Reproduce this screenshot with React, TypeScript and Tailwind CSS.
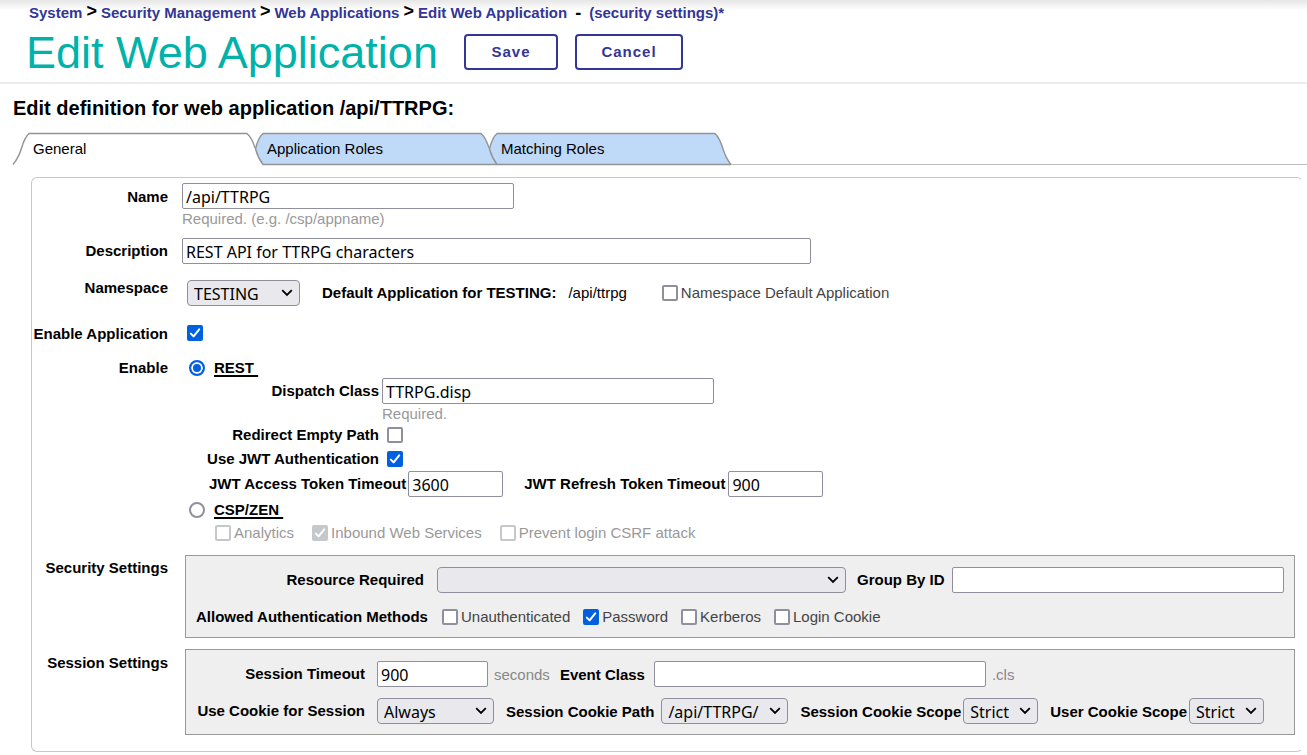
import { useId, useState } from "react";
import type { InputHTMLAttributes, ReactNode } from "react";
import clsx from "clsx";

// ── Form controls ───────────────────────────────────────────

function TextInput({ className, ...props }: InputHTMLAttributes<HTMLInputElement>) {
    return (
        <input
            type="text"
            className={clsx(
                "h-[26px] shrink-0 rounded-xs border border-[#8f8f9d] bg-white px-[3px] pt-0.5 font-['Noto_Sans',sans-serif] text-base leading-5 text-black",
                className,
            )}
            {...props}
        />
    );
}

function Select({ id, options, className }: { id: string; options: string[]; className?: string }) {
    return (
        <span className={clsx("inline-grid shrink-0 items-center", className)}>
            <select
                id={id}
                className="col-start-1 row-start-1 h-[26px] w-full appearance-none rounded border border-[#8f8f9d] bg-[#e9e9ed] pt-px pl-1.5 pr-6 font-['Noto_Sans',sans-serif] text-base leading-5 text-black"
            >
                {options.map((option) => (
                    <option key={option}>{option}</option>
                ))}
            </select>
            <svg
                width="12"
                height="8"
                viewBox="0 0 12 8"
                fill="none"
                stroke="#000"
                strokeWidth="1.8"
                className="pointer-events-none col-start-1 row-start-1 mr-[7px] justify-self-end"
            >
                <path d="M1.2 1.2 6 6l4.8-4.8" />
            </svg>
        </span>
    );
}

function Checkbox({ id, checked, disabled }: { id: string; checked?: boolean; disabled?: boolean }) {
    return (
        <span className={clsx("inline-grid size-4 shrink-0", disabled && "opacity-50")}>
            <input
                id={id}
                type="checkbox"
                defaultChecked={checked}
                disabled={disabled}
                className={clsx(
                    "peer col-start-1 row-start-1 size-4 appearance-none rounded-xs border-2 border-[#8f8f9d] bg-white",
                    disabled ? "checked:bg-[#8f8f9d]" : "checked:border-[#0060df] checked:bg-[#0060df]",
                )}
            />
            <svg
                viewBox="0 0 16 16"
                fill="none"
                stroke="#fff"
                strokeWidth="2"
                strokeLinecap="round"
                strokeLinejoin="round"
                className="pointer-events-none invisible col-start-1 row-start-1 size-4 peer-checked:visible"
            >
                <path d="M3.8 8.6 6.6 11.4 12.2 4.4" />
            </svg>
        </span>
    );
}

function CheckField({ text, checked, disabled }: { text: string; checked?: boolean; disabled?: boolean }) {
    const id = useId();
    return (
        <span className="flex items-center gap-[3px]">
            <Checkbox id={id} checked={checked} disabled={disabled} />
            <label htmlFor={id} className={clsx("whitespace-nowrap", disabled ? "text-[#999]" : "text-[#444]")}>
                {text}
            </label>
        </span>
    );
}

function Radio({ id, checked }: { id: string; checked?: boolean }) {
    return (
        <input
            id={id}
            type="radio"
            name="enable"
            defaultChecked={checked}
            className="size-4 shrink-0 appearance-none rounded-full border-2 border-[#8f8f9d] bg-white checked:border-[#0060df] checked:bg-[#0060df] checked:shadow-[inset_0_0_0_2px_#fff]"
        />
    );
}

function Label({ htmlFor, className, children }: { htmlFor: string; className?: string; children: ReactNode }) {
    return (
        <label htmlFor={htmlFor} className={clsx("shrink-0 whitespace-nowrap font-bold", className)}>
            {children}
        </label>
    );
}

// ── Tabs ────────────────────────────────────────────────────

// Each fill runs on under the next tab's left curve.
const TABS = [
    {
        name: "General",
        width: "w-[242px] pl-5",
        box: "0 0 242 33",
        outline: "M0 32.5C11 20 7 10 16 1.5H234Q239 6 242 16",
        fill: "M0 32.5C11 20 7 10 16 1.5H234Q239 6 242 16Q245 26 250 32.5Z",
    },
    {
        name: "Application Roles",
        width: "w-[234px] pl-3",
        box: "0 0 234 33",
        outline: "M242 32.5H8Q3 26 .5 17Q3 6 8 1.5H226Q231 6 234 16",
        fill: "M8 32.5Q3 26 .5 17Q3 6 8 1.5H226Q231 6 234 16Q237 26 242 32.5Z",
    },
    {
        name: "Matching Roles",
        width: "w-[242px] pl-3",
        box: "0 0 242 33",
        outline: "M242 32.5H8Q3 26 .5 17Q3 6 8 1.5H226C235 10 232 21 242 32.5",
        fill: "M8 32.5Q3 26 .5 17Q3 6 8 1.5H226C235 10 232 21 242 32.5Z",
    },
];

function TabBar() {
    const [active, setActive] = useState("General");

    return (
        <div role="tablist" className="flex pl-[13px]">
            {TABS.map((tab) => (
                <button
                    key={tab.name}
                    role="tab"
                    aria-selected={tab.name === active}
                    onClick={() => setActive(tab.name)}
                    className={clsx("relative h-[33px] shrink-0 text-left", tab.width)}
                >
                    <svg viewBox={tab.box} className="absolute inset-0 size-full overflow-visible" fill="none">
                        <path d={tab.fill} fill={tab.name === active ? "#fff" : "#bfd9f9"} />
                        <path d={tab.outline} stroke="#939393" strokeWidth="1.4" />
                    </svg>
                    <span className="relative">{tab.name}</span>
                </button>
            ))}
            <div className="flex-1 border-b border-[#bbb]" />
        </div>
    );
}

// ── Page ────────────────────────────────────────────────────

const CRUMBS = ["System", "Security Management", "Web Applications", "Edit Web Application"];

function Header() {
    return (
        <header className="border-b-2 border-[#ececec] bg-linear-to-b from-[#e6e6e6] to-white to-[10px] pb-1 pl-[26px]">
            <nav className="flex h-[26px] items-center gap-1 pl-[3px] font-bold text-[#333695]">
                {CRUMBS.map((crumb, index) => (
                    <span key={crumb} className="flex items-center gap-1 whitespace-nowrap">
                        {index > 0 && <span className="pb-1 text-lg leading-5 text-black">&gt;</span>}
                        <a href="#">{crumb}</a>
                    </span>
                ))}
                <span className="px-1 text-lg leading-5 text-black">-</span>
                <a href="#">(security settings)*</a>
            </nav>
            <div className="flex h-[52px] items-center">
                <h1 className="w-[438px] shrink-0 whitespace-nowrap pt-0.5 text-[45px] leading-[50px] text-[#00b2a9]">Edit Web Application</h1>
                <button className="mr-[17px] h-9 w-[94px] rounded border-2 border-[#333695] font-bold tracking-[1px] text-[#333695]">Save</button>
                <button className="h-9 w-[108px] rounded border-2 border-[#333695] font-bold tracking-[1px] text-[#333695]">Cancel</button>
            </div>
        </header>
    );
}

function Row({ label, htmlFor, className, labelClass, children }: { label: string; htmlFor?: string; className?: string; labelClass?: string; children: ReactNode }) {
    return (
        <div className={clsx("flex items-start", className)}>
            <label htmlFor={htmlFor} className={clsx("mr-3.5 w-[136px] shrink-0 whitespace-nowrap text-right font-bold", labelClass)}>
                {label}
            </label>
            {children}
        </div>
    );
}

export default function App() {
    return (
        <div className="bg-white font-['Liberation_Sans',Arial,sans-serif] text-[15px] leading-5 text-black">
            <Header />
            <h2 className="pl-[13px] pt-[11px] pb-[11px] text-xl leading-[26px] font-bold">Edit definition for web application /api/TTRPG:</h2>
            <TabBar />

            <form className="mt-3 mr-1 ml-[31px] rounded-md border border-[#c8c8c8] border-r-transparent pt-[5px] pr-[7px] pb-4">
                <Row label="Name" htmlFor="name" labelClass="leading-7">
                    <div className="flex flex-col">
                        <TextInput id="name" defaultValue="/api/TTRPG" className="w-[332px]" />
                        <span className="leading-[19px] text-[#999]">Required. (e.g. /csp/appname)</span>
                    </div>
                </Row>

                <Row label="Description" htmlFor="description" className="mt-2.5" labelClass="leading-[26px]">
                    <TextInput id="description" defaultValue="REST API for TTRPG characters" className="w-[629px]" />
                </Row>

                <Row label="Namespace" htmlFor="namespace" className="mt-[15px]" labelClass="leading-[18px]">
                    <div className="ml-[5px] flex items-center pt-px">
                        <Select id="namespace" options={["TESTING", "USER"]} className="w-[113px]" />
                        <b className="ml-[22px]">Default Application for TESTING:</b>
                        <span className="mr-[35px] ml-3">/api/ttrpg</span>
                        <CheckField text="Namespace Default Application" />
                    </div>
                </Row>

                <Row label="Enable Application" htmlFor="enabled" className="mt-[18px]">
                    <span className="ml-[5px] flex pt-px">
                        <Checkbox id="enabled" checked />
                    </span>
                </Row>

                <Row label="Enable" className="mt-3.5">
                    <div className="ml-[7px]">
                        <div className="flex items-center gap-[9px]">
                            <Radio id="rest" checked />
                            <Label htmlFor="rest" className="underline decoration-2 underline-offset-2">REST&nbsp;</Label>
                        </div>
                        <div className="flex items-center">
                            <Label htmlFor="dispatch" className="mr-[3px] w-[190px] text-right">Dispatch Class</Label>
                            <TextInput id="dispatch" defaultValue="TTRPG.disp" className="w-[332px]" />
                        </div>
                        <p className="pl-[193px] text-[#999]">Required.</p>
                        <div className="mt-px flex items-center">
                            <Label htmlFor="redirect" className="mr-2 w-[190px] text-right">Redirect Empty Path</Label>
                            <Checkbox id="redirect" />
                        </div>
                        <div className="mt-1 flex items-center">
                            <Label htmlFor="jwt" className="mr-2 w-[190px] text-right">Use JWT Authentication</Label>
                            <Checkbox id="jwt" checked />
                        </div>
                        <div className="mt-0.5 flex items-center">
                            <Label htmlFor="access" className="mr-0.5 ml-5">JWT Access Token Timeout</Label>
                            <TextInput id="access" defaultValue="3600" className="w-[95px]" />
                            <Label htmlFor="refresh" className="mr-[3px] ml-[21px]">JWT Refresh Token Timeout</Label>
                            <TextInput id="refresh" defaultValue="900" className="w-[95px]" />
                        </div>
                        <div className="mt-[3px] flex items-center gap-[9px]">
                            <Radio id="csp" />
                            <Label htmlFor="csp" className="underline decoration-2 underline-offset-2">CSP/ZEN&nbsp;</Label>
                        </div>
                        <div className="mt-[3px] ml-[26px] flex items-center gap-[18px]">
                            <CheckField text="Analytics" disabled />
                            <CheckField text="Inbound Web Services" checked disabled />
                            <CheckField text="Prevent login CSRF attack" disabled />
                        </div>
                    </div>
                </Row>

                <Row label="Security Settings" className="mt-3" labelClass="leading-[26px]">
                    <div className="ml-[3px] flex-1 border border-[#999] bg-[#efefef] py-2.5 pl-2.5 pr-2">
                        <div className="mt-px flex items-center">
                            <Label htmlFor="resource" className="mr-[13px] w-[228px] text-right">Resource Required</Label>
                            <Select id="resource" options={[""]} className="w-[409px]" />
                            <Label htmlFor="group" className="mr-[7px] ml-[11px]">Group By ID</Label>
                            <TextInput id="group" className="w-[332px]" />
                        </div>
                        <div className="mt-3.5 flex items-center">
                            <b className="mr-[18px] w-[228px] shrink-0 whitespace-nowrap text-right">Allowed Authentication Methods</b>
                            <div className="flex gap-[13px]">
                                <CheckField text="Unauthenticated" />
                                <CheckField text="Password" checked />
                                <CheckField text="Kerberos" />
                                <CheckField text="Login Cookie" />
                            </div>
                        </div>
                    </div>
                </Row>

                <Row label="Session Settings" className="mt-[11px]" labelClass="leading-7">
                    <div className="ml-[3px] flex-1 border border-[#999] bg-[#efefef] pt-[11px] pb-2.5 pl-2.5">
                        <div className="flex items-center">
                            <Label htmlFor="timeout" className="mr-3 w-[169px] text-right">Session Timeout</Label>
                            <TextInput id="timeout" defaultValue="900" className="w-[111px]" />
                            <span className="mr-2.5 ml-1.5 pt-0.5 text-[#888]">seconds</span>
                            <Label htmlFor="event" className="mr-[9px] pt-0.5">Event Class</Label>
                            <TextInput id="event" className="w-[332px]" />
                            <span className="ml-1.5 pt-0.5 text-[#888]">.cls</span>
                        </div>
                        <div className="mt-[11px] flex items-center">
                            <Label htmlFor="cookie" className="mr-3 w-[169px] text-right">Use Cookie for Session</Label>
                            <Select id="cookie" options={["Always", "Autodetect", "Never"]} className="w-[117px]" />
                            <Label htmlFor="path" className="mr-[7px] ml-3 pt-0.5">Session Cookie Path</Label>
                            <Select id="path" options={["/api/TTRPG/"]} className="w-[127px]" />
                            <Label htmlFor="scope" className="mr-0.5 ml-3 pt-0.5">Session Cookie Scope</Label>
                            <Select id="scope" options={["Strict", "Lax", "None"]} className="w-[75px]" />
                            <Label htmlFor="user-scope" className="mr-0.5 ml-3 pt-0.5">User Cookie Scope</Label>
                            <Select id="user-scope" options={["Strict", "Lax", "None"]} className="w-[75px]" />
                        </div>
                    </div>
                </Row>
            </form>
        </div>
    );
}
